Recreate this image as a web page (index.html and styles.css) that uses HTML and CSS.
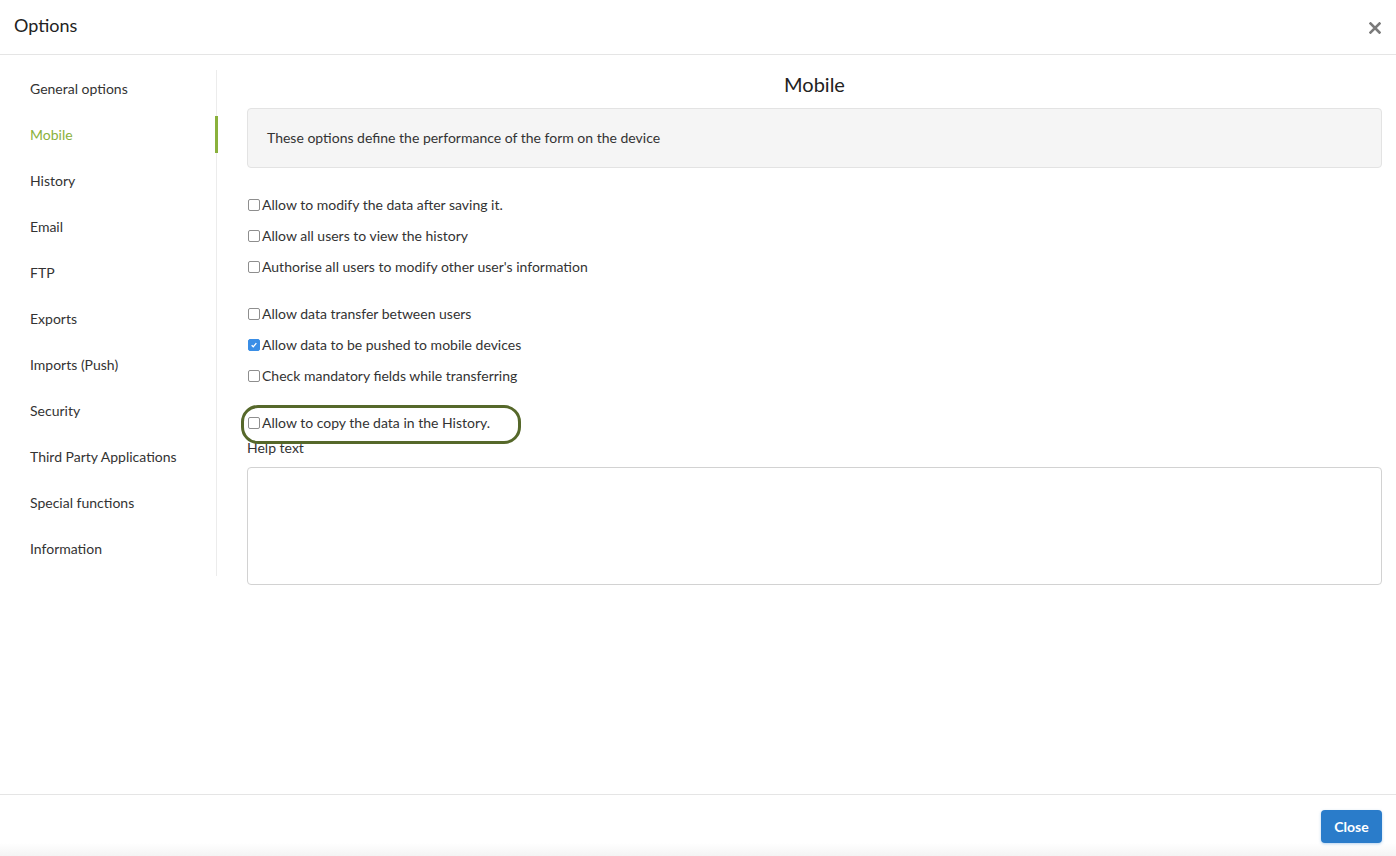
FILE: index.html
```html
<!DOCTYPE html>
<html lang="en">
<head>
    <meta charset="UTF-8">
    <title>Options</title>
    <link rel="stylesheet" href="styles.css">
</head>
<body>
    <div class="modal">
        <header class="modal-header">
            <h1>Options</h1>
            <button class="close-x" aria-label="Close">
                <svg width="12" height="12" viewBox="0 0 12 12">
                    <path d="M1.5 1.5 L10.5 10.5 M10.5 1.5 L1.5 10.5" stroke="#7b7b7b" stroke-width="2.6" stroke-linecap="square"/>
                </svg>
            </button>
        </header>

        <div class="modal-body">
            <nav class="side-nav">
                <ul>
                    <li><a href="#">General options</a></li>
                    <li class="active"><a href="#">Mobile</a></li>
                    <li><a href="#">History</a></li>
                    <li><a href="#">Email</a></li>
                    <li><a href="#">FTP</a></li>
                    <li><a href="#">Exports</a></li>
                    <li><a href="#">Imports (Push)</a></li>
                    <li><a href="#">Security</a></li>
                    <li><a href="#">Third Party Applications</a></li>
                    <li><a href="#">Special functions</a></li>
                    <li><a href="#">Information</a></li>
                </ul>
            </nav>

            <section class="panel">
                <h2>Mobile</h2>
                <div class="info-box">These options define the performance of the form on the device</div>

                <div class="group">
                    <label class="check"><input type="checkbox"> Allow to modify the data after saving it.</label>
                    <label class="check"><input type="checkbox"> Allow all users to view the history</label>
                    <label class="check"><input type="checkbox"> Authorise all users to modify other user's information</label>
                </div>

                <div class="group">
                    <label class="check"><input type="checkbox"> Allow data transfer between users</label>
                    <label class="check"><input type="checkbox" checked> Allow data to be pushed to mobile devices</label>
                    <label class="check"><input type="checkbox"> Check mandatory fields while transferring</label>
                </div>

                <div class="group last">
                    <label class="check marked"><input type="checkbox"> Allow to copy the data in the History.</label>
                </div>

                <label class="field-label" for="help">Help text</label>
                <textarea id="help" class="help-text"></textarea>
            </section>
        </div>

        <footer class="modal-footer">
            <button class="btn-primary">Close</button>
        </footer>
    </div>
</body>
</html>
```

FILE: styles.css
```css
/* Global */
* {
    margin: 0;
    padding: 0;
    box-sizing: border-box;
}

body {
    font-family: Lato, "Open Sans", sans-serif;
    font-size: 14px;
    color: #333;
    background-color: #fff;
}

a {
    color: inherit;
    text-decoration: none;
}

ul {
    list-style-type: none;
}

.modal {
    height: 100vh;
    display: flex;
    flex-direction: column;
}

/* Header */
.modal-header {
    height: 55px;
    display: flex;
    align-items: center;
    justify-content: space-between;
    padding: 0 15px 4px 14px;
    border-bottom: 1px solid #e5e5e5;
}

.modal-header h1 {
    font-size: 18px;
    font-weight: 400;
    color: #222;
}

.close-x {
    border: none;
    background: none;
    width: 12px;
    height: 12px;
    display: flex;
    margin-top: 5px;
}

/* Body */
.modal-body {
    flex: 1;
    display: flex;
    align-items: flex-start;
    padding-top: 15px;
}

.side-nav {
    width: 217px;
    border-right: 1px solid #ececec;
    flex-shrink: 0;
}

.side-nav li {
    position: relative;
    height: 37px;
    line-height: 37px;
    margin-bottom: 9px;
    padding-left: 30px;
}

.side-nav li.active {
    color: #8ab13c;
}

.side-nav li.active::after {
    content: "";
    position: absolute;
    top: 0;
    right: -2px;
    width: 3px;
    height: 100%;
    background-color: #8ab13c;
}

.panel {
    flex: 1;
    padding: 0 14px 0 30px;
}

.panel h2 {
    font-size: 20px;
    font-weight: 400;
    line-height: 29px;
    text-align: center;
    color: #222;
    margin-bottom: 9px;
}

.info-box {
    background-color: #f5f5f5;
    border: 1px solid #e3e3e3;
    border-radius: 4px;
    padding: 19px 19px;
    line-height: 20px;
    margin-bottom: 26px;
}

.group {
    display: flex;
    flex-direction: column;
    gap: 11px;
    margin-bottom: 27px;
}

.group.last {
    margin-bottom: 6px;
}

.check {
    position: relative;
    display: flex;
    align-items: center;
    height: 20px;
}

.check input {
    appearance: none;
    width: 12px;
    height: 12px;
    border: 1px solid #8e8e8e;
    border-radius: 2px;
    background-color: #fff;
    margin: 1px 2px 0 1px;
    flex-shrink: 0;
}

.check input:checked {
    border-color: #3a8ee6;
    background-color: #3a8ee6;
    background-image: url("data:image/svg+xml,%3Csvg xmlns='http://www.w3.org/2000/svg' viewBox='0 0 12 12'%3E%3Cpath d='M3.2 6.3 L5.1 8.2 L8.8 3.8' fill='none' stroke='white' stroke-width='1.6'/%3E%3C/svg%3E");
    background-size: 100% 100%;
}

/* highlight ring drawn over the option */
.check.marked::before {
    content: "";
    position: absolute;
    left: -6px;
    top: -7px;
    width: 274px;
    height: 33px;
    border: 3px solid #56682a;
    border-radius: 17px;
}

.field-label {
    display: block;
    line-height: 20px;
    margin-bottom: 9px;
}

.help-text {
    display: block;
    width: 100%;
    height: 118px;
    border: 1px solid #d2d2d2;
    border-radius: 4px;
    resize: none;
}

/* Footer */
.modal-footer {
    height: 62px;
    border-top: 1px solid #e5e5e5;
    display: flex;
    justify-content: flex-end;
    align-items: flex-start;
    padding: 15px 14px 0 0;
    background: linear-gradient(to bottom, #fff 0, #fff 48px, #f3f3f3 62px);
}

.btn-primary {
    width: 61px;
    height: 33px;
    border: none;
    border-radius: 4px;
    background-color: #2a7cca;
    color: #fff;
    font-family: Lato, "Open Sans", sans-serif;
    font-size: 14px;
    font-weight: 700;
    box-shadow: 0 1px 3px rgba(42, 124, 202, 0.35);
}
```
